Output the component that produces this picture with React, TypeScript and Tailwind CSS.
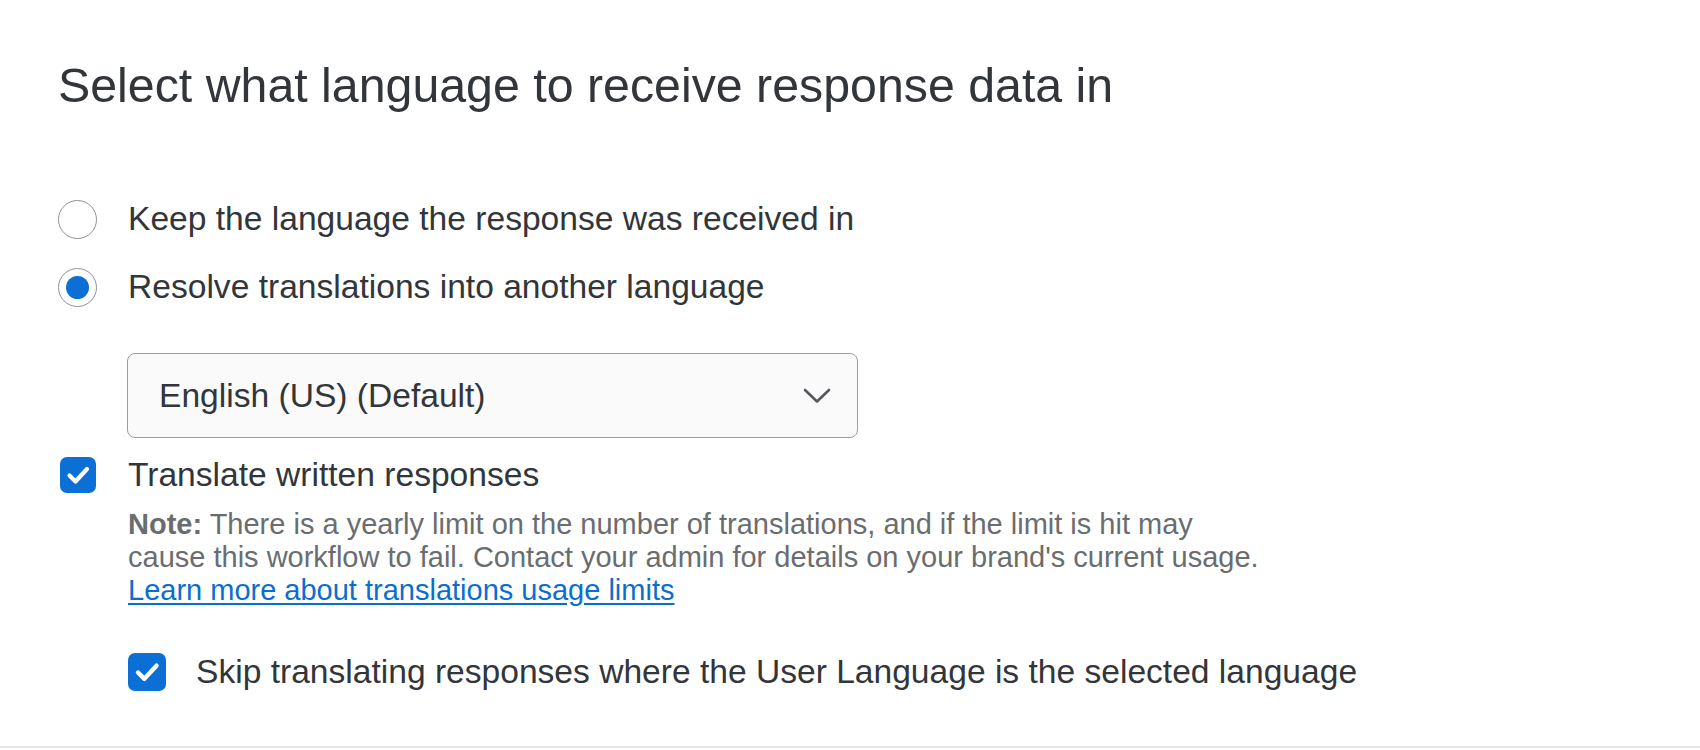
import React from "react";

const font = { fontFamily: '"Liberation Sans", Arial, sans-serif' };

function Check({ size }: { size: number }) {
  return (
    <div
      className="flex items-center justify-center rounded-[7px] bg-[#0b6fd6]"
      style={{ width: size, height: size }}
    >
      <svg width={size} height={size} viewBox="0 0 36 36" fill="none">
        <path
          d="M9.5 18.5 L15.5 24.5 L27 12"
          stroke="#ffffff"
          strokeWidth="4.2"
          strokeLinecap="round"
          strokeLinejoin="round"
        />
      </svg>
    </div>
  );
}

export default function App() {
  return (
    <div className="w-[1700px] bg-white" style={font}>
      <div className="h-[746px] px-[58px] pt-[61px] text-[#32363a]">
        <h1 className="text-[48.3px] leading-[48px] font-normal text-[#32363a]">
          Select what language to receive response data in
        </h1>

        <div className="mt-[88px] flex h-[44px] items-center">
          <div className="w-[70px]">
            <div className="h-[39px] w-[39px] rounded-full border-[1.5px] border-[#8d9399] bg-white" />
          </div>
          <span className="text-[33.6px] leading-[44px]">
            Keep the language the response was received in
          </span>
        </div>

        <div className="mt-[24px] flex h-[44px] items-center">
          <div className="w-[70px]">
            <div className="flex h-[39px] w-[39px] items-center justify-center rounded-full border-[1.5px] border-[#8d9399] bg-white">
              <div className="h-[23px] w-[23px] rounded-full bg-[#0b6fd6]" />
            </div>
          </div>
          <span className="text-[33.6px] leading-[44px]">
            Resolve translations into another language
          </span>
        </div>

        <div className="ml-[69px] mt-[44px] flex h-[85px] w-[731px] items-center justify-between rounded-[8px] border-[1.5px] border-[#9a9ea3] bg-[#fafafa] pl-[31px] pr-[26px]">
          <span className="text-[33.6px] leading-[44px]">English (US) (Default)</span>
          <svg width="28" height="16" viewBox="0 0 28 16" fill="none">
            <path
              d="M2 2 L14 13.5 L26 2"
              stroke="#55595e"
              strokeWidth="2.6"
              strokeLinecap="round"
              strokeLinejoin="round"
            />
          </svg>
        </div>

        <div className="mt-[17px] flex h-[40px] items-center">
          <div className="w-[70px] pl-[2px]">
            <Check size={36} />
          </div>
          <span className="text-[33.6px] leading-[44px]">Translate written responses</span>
        </div>

        <div className="ml-[70px] mt-[13px] text-[29px] leading-[33px] text-[#6a6d70]">
          <span className="font-bold">Note:</span> There is a yearly limit on the number of
          translations, and if the limit is hit may
          <br />
          cause this workflow to fail. Contact your admin for details on your brand's current
          usage.
          <br />
          <a className="text-[#0a6ed1] underline underline-offset-[3px]" href="#">
            Learn more about translations usage limits
          </a>
        </div>

        <div className="ml-[70px] mt-[45px] flex h-[40px] items-center">
          <div className="w-[68px]">
            <Check size={38} />
          </div>
          <span className="text-[33.6px] leading-[44px]">
            Skip translating responses where the User Language is the selected language
          </span>
        </div>
      </div>
      <div className="h-[4px] border-t-[2px] border-[#e6e6e6] bg-white" />
    </div>
  );
}
